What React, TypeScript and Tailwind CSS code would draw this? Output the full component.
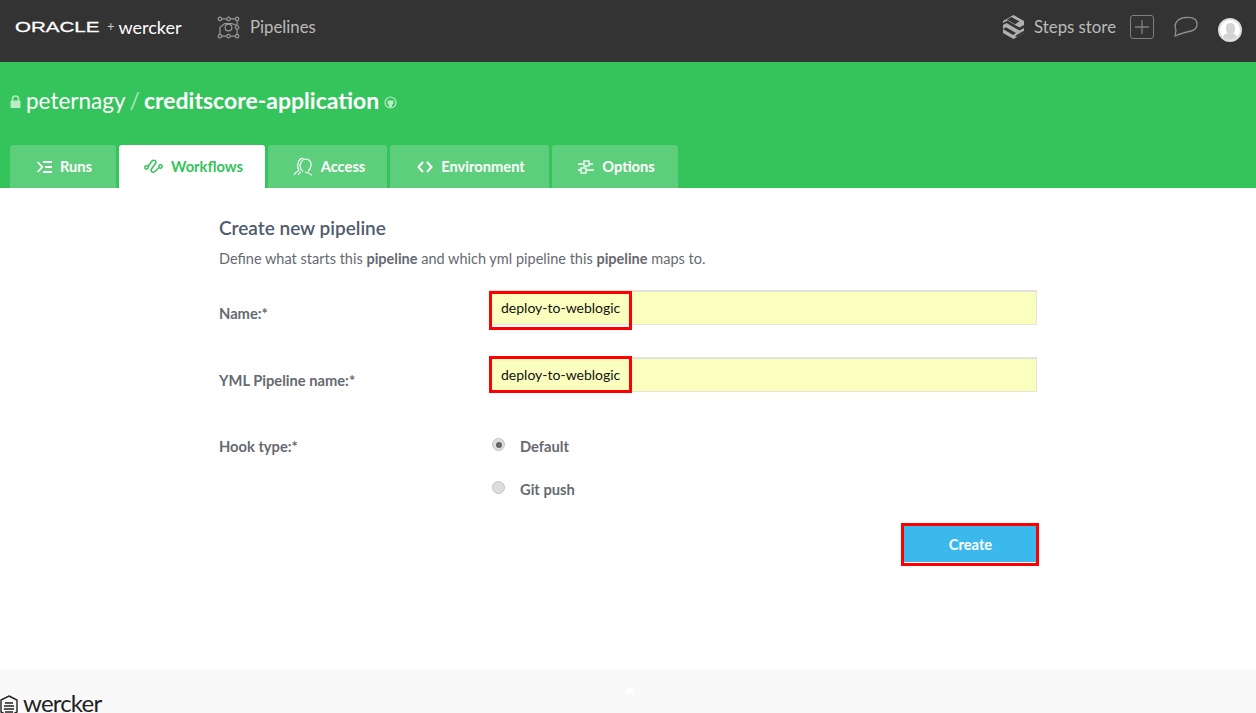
import { ReactNode } from "react";

const PipelinesIcon = () => (
  <svg width="23" height="23" viewBox="0 0 24 24" fill="none" stroke="#9a9a9a" strokeWidth="1.200">
    <circle cx="3" cy="3" r="1.800" />
    <circle cx="12" cy="3" r="1.800" />
    <circle cx="21" cy="3" r="1.800" />
    <circle cx="21" cy="12" r="1.800" />
    <circle cx="3" cy="21" r="1.800" />
    <circle cx="12" cy="21" r="1.800" />
    <circle cx="21" cy="21" r="1.800" />
    <circle cx="12" cy="12" r="3.500" />
    <path d="M5 3h5M14 3h5M21 5v5M21 14v5M5 21h5M14 21h5M3 19v-7l5-4h8M16 8l5 2" />
  </svg>
);

const StepsIcon = () => (
  <svg width="23" height="24" viewBox="0 0 23 24">
    <path d="M11.500 0L22 6v12L11.500 24 1 18V6z" fill="#b0b0b0" />
    <path d="M5 4.500L9.500 2l8 4.600-4.500 2.600zM1 8l4.500-2.500 12 7L22 10v3l-4.500 2.600-13-7.600L1 10zM1 14l3-1.700 10 5.800-3 1.800-10-5.800zM13 21l5-3 4-2.300V18l-7 4z" fill="#333333" />
  </svg>
);

const RunsIcon = () => (
  <svg width="15" height="12" viewBox="0 0 15 12" fill="none" stroke="white" strokeWidth="1.800">
    <path d="M.700 1l4.500 5L.700 11M6 1h9M8 6h7M6 11h9" />
  </svg>
);

const WorkflowsIcon = () => (
  <svg width="19" height="18" viewBox="0 0 19 18" fill="none" stroke="#35c35a" strokeWidth="1.500">
    <circle cx="2.500" cy="9.500" r="1.700" />
    <circle cx="16.500" cy="8.500" r="1.700" />
    <path d="M4 8.500L8 3c1.800-2 5 .3 3.500 2.500L7.500 11c-1.500 2.200 1.500 4.500 3.500 2.500L15 9.500" />
  </svg>
);

const AccessIcon = () => (
  <svg width="20" height="19" viewBox="0 0 20 19" fill="none" stroke="white" strokeWidth="1.100">
    <path d="M1 18c1-3 3-3.500 5-4.500-1.500-2-1.500-5-1-7C5.500 3 8 1 10.500 1.500" />
    <path d="M10 14.500c-2-1.500-3.500-4.500-2.500-8C8.500 3 12 1 15 2.500c3 1.500 3.500 5 2.500 8-.5 2-1.500 3-2.500 4" />
    <path d="M8 15c-1 .8-2 1.500-3 3M12 15c1.500.5 5 1 7 3.500" />
  </svg>
);

const CodeIcon = () => (
  <svg width="16" height="12" viewBox="0 0 16 12" fill="none" stroke="white" strokeWidth="2">
    <path d="M6 1L1.500 6 6 11M10 1l4.500 5L10 11" />
  </svg>
);

const OptionsIcon = () => (
  <svg width="16" height="14" viewBox="0 0 16 14" fill="none" stroke="white" strokeWidth="1.300">
    <path d="M0 4h6M11 4h4M0 10h3M8 10h8" />
    <rect x="6" y="1" width="5" height="5" />
    <rect x="3" y="8" width="5" height="5" />
  </svg>
);

type TabProps = { width: string; icon: ReactNode; label: string; active?: boolean };

const Tab = ({ width, icon, label, active }: TabProps) => (
  <div
    className={`flex items-center justify-center gap-2 h-[43px] pl-[3px] rounded-t-[3px] text-[14.7px] font-bold ${width} ${
      active ? "bg-white text-[#35c35a]" : "bg-[#5dcf7c] text-white"
    }`}
  >
    {icon}
    <span>{label}</span>
  </div>
);

type FieldProps = { label: string; value: string; mt: string };

const Field = ({ label, value, mt }: FieldProps) => (
  <div className={`flex items-center ${mt}`}>
    <label className="w-[271px] pt-[11px] text-[14.7px] font-bold text-[#666a70]">{label}</label>
    <input
      readOnly
      value={value}
      className="w-[547px] h-[35px] px-[10px] bg-[#fbffbd] border border-[#e4e4d8] shadow-[inset_1px_1px_1px_#dddddd] text-[14px] text-[#111111] outline-none"
    />
  </div>
);

const Radio = ({ checked }: { checked?: boolean }) => (
  <span className="flex items-center justify-center mb-[3px] w-[13px] h-[13px] rounded-full bg-[#dddddd] border border-[#c4c4c4]">
    {checked && <span className="w-[6px] h-[6px] rounded-full bg-[#666666]" />}
  </span>
);

const RedBox = ({ className }: { className: string }) => (
  <div className={`absolute border-[3px] border-[#ff0000] pointer-events-none ${className}`} />
);

export default function App() {
  return (
    <div className="relative h-[713px] overflow-hidden bg-white font-['Lato','Open_Sans',sans-serif]">
      <header className="flex items-center h-[62px] pb-[8px] bg-[#333333]">
        <div className="flex items-center ml-[15px] w-[202px]">
          <span className="w-[92px] mt-[1px] font-['Liberation_Sans',sans-serif] text-[15px] text-white [-webkit-text-stroke:0.3px_white] scale-x-[1.37] origin-left">
            ORACLE
          </span>
          <span className="mr-[4px] text-[13px] text-[#cccccc]">+</span>
          <span className="text-[18px] text-white">wercker</span>
        </div>
        <PipelinesIcon />
        <span className="ml-[10px] text-[16.8px] text-[#bbbbbb]">Pipelines</span>
        <div className="flex items-center ml-auto">
          <StepsIcon />
          <span className="ml-[9px] text-[16.8px] text-[#bbbbbb]">Steps store</span>
          <div className="flex items-center justify-center ml-[14px] w-6 h-6 rounded-[3px] border border-[#808080]">
            <svg width="14" height="14" viewBox="0 0 14 14" stroke="#808080" strokeWidth="1.300">
              <path d="M7 0v14M0 7h14" />
            </svg>
          </div>
          <svg className="ml-[20px]" width="24" height="22" viewBox="0 0 24 22" fill="none" stroke="#909090" strokeWidth="1.300">
            <path d="M1 20l1-6C-.5 8 3 2 12 1.500c6-.3 11 1 11 6.500 0 6-5 7-10 8-4 .8-8 2.500-12 4z" />
          </svg>
          <div className="relative flex items-end justify-center mt-[6px] ml-[20px] mr-[14px] w-6 h-6 rounded-full bg-white border-2 border-[#dddddd] overflow-hidden">
            <div className="absolute top-[3px] w-[9px] h-[11px] rounded-full bg-[#d4d4d4]" />
            <div className="w-4 h-[7px] rounded-t-full bg-[#d4d4d4]" />
          </div>
        </div>
      </header>

      <section className="h-[126px] bg-[#34c45b]">
        <div className="flex items-center h-[77px] pl-[10px] text-white">
          <svg width="11" height="13" viewBox="0 0 11 13" className="mt-[2px]">
            <path d="M2.500 6V4a3 3 0 0 1 6 0v2" fill="none" stroke="#b8ecc6" strokeWidth="1.500" />
            <rect x="0.500" y="5.500" width="10" height="7.500" rx="1" fill="#b8ecc6" />
          </svg>
          <span className="ml-[5px] text-[22.5px]">peternagy</span>
          <span className="ml-[4px] text-[23px] text-[#a6e6b8]">/</span>
          <span className="ml-[4px] text-[23px] font-bold">creditscore-application</span>
          <svg width="13" height="13" viewBox="0 0 13 13" className="ml-[5px] mt-[3px]">
            <circle cx="6.500" cy="6.500" r="5.500" fill="none" stroke="#b8ecc6" strokeWidth="1.200" />
            <path d="M3.500 4.500h6v3l-1.500 1.500v2h-3V9L3.500 7.500z" fill="#b8ecc6" />
          </svg>
        </div>
        <nav className="flex gap-[3px] mt-[6px] pl-[10px]">
          <Tab width="w-[106px]" icon={<RunsIcon />} label="Runs" />
          <Tab width="w-[146px]" icon={<WorkflowsIcon />} label="Workflows" active />
          <Tab width="w-[119px]" icon={<AccessIcon />} label="Access" />
          <Tab width="w-[159px]" icon={<CodeIcon />} label="Environment" />
          <Tab width="w-[126px]" icon={<OptionsIcon />} label="Options" />
        </nav>
      </section>

      <main className="relative h-[481px] pl-[219px] pt-[28px]">
        <h1 className="text-[19px] leading-[24px] font-semibold text-[#4f5b6e]">Create new pipeline</h1>
        <p className="mt-[9px] text-[14.5px] leading-[20px] text-[#666a70]">
          Define what starts this <b>pipeline</b> and which yml pipeline this <b>pipeline</b> maps to.
        </p>
        <Field label="Name:*" value="deploy-to-weblogic" mt="mt-[21px]" />
        <Field label="YML Pipeline name:*" value="deploy-to-weblogic" mt="mt-[32px]" />
        <div className="flex mt-[44px]">
          <span className="w-[273px] text-[14.7px] leading-[20px] font-bold text-[#666a70]">Hook type:*</span>
          <div className="flex flex-col gap-[23px] text-[14.7px] leading-[20px] font-bold text-[#666a70]">
            <div className="flex items-center gap-[15px]">
              <Radio checked />
              <span>Default</span>
            </div>
            <div className="flex items-center gap-[15px]">
              <Radio />
              <span>Git push</span>
            </div>
          </div>
        </div>
        <div className="flex justify-end w-[818px] mt-[27px]">
          <button className="w-[133px] h-[36px] bg-[#3cb9ec] text-[14.7px] font-bold text-white">Create</button>
        </div>
        <RedBox className="left-[489px] top-[103px] w-[143px] h-[39px]" />
        <RedBox className="left-[489px] top-[168px] w-[143px] h-[37px]" />
        <RedBox className="left-[901px] top-[335px] w-[138px] h-[43px]" />
      </main>

      <footer className="absolute left-0 right-0 top-[669px] bottom-0 flex items-end bg-[#f9f9f9]">
        <svg width="20" height="20" viewBox="0 0 20 20" fill="none" stroke="#222222" strokeWidth="1.400" className="mb-[-2px]">
          <path d="M9 1l8 4v12l-8 4-8-4V5z" />
          <path d="M5 8h8M4 11h10M4 14h10M5 17h8" />
        </svg>
        <span className="ml-[3px] text-[24px] leading-[20px] tracking-[-0.8px] text-[#222222]">wercker</span>
        <div className="absolute left-[626px] top-[19px] w-2 h-[5px] rounded-t-full bg-white" />
      </footer>
    </div>
  );
}
